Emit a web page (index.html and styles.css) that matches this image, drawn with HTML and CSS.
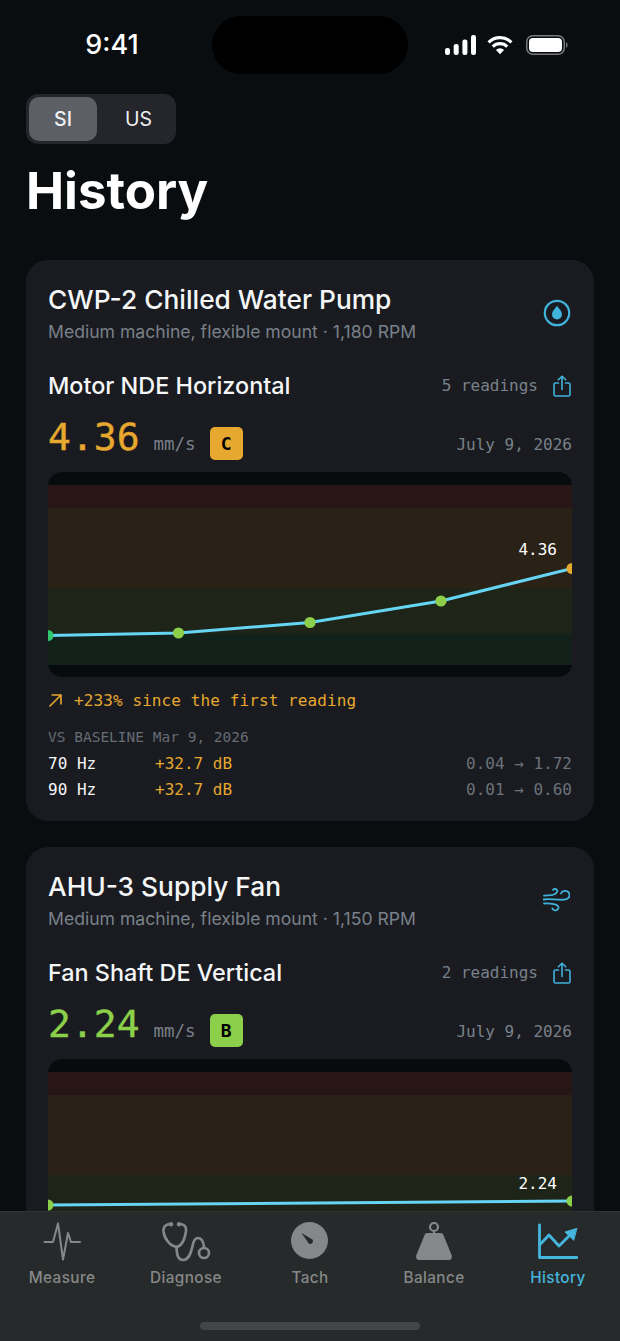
FILE: index.html
```html
<!DOCTYPE html>
<html lang="en">
<head>
    <meta charset="UTF-8">
    <meta name="viewport" content="width=device-width, initial-scale=1.0">
    <title>History</title>
    <link rel="stylesheet" href="styles.css">
</head>
<body>
    <div class="screen">
        <div class="status-bar">
            <span class="clock">9:41</span>
            <span class="island"></span>
            <div class="status-icons">
                <svg width="31" height="20" viewBox="0 0 31 20" fill="#fff">
                    <rect x="0" y="13" width="5" height="7" rx="2.2"/>
                    <rect x="8.700" y="9" width="5" height="11" rx="2.2"/>
                    <rect x="17.400" y="4.500" width="5" height="15.500" rx="2.2"/>
                    <rect x="26" y="0" width="5" height="20" rx="2.2"/>
                </svg>
                <svg width="26" height="20" viewBox="0 0 27 20" fill="none" stroke="#fff" stroke-width="3.2">
                    <path d="M1.6 7.2a17 17 0 0 1 23.8 0"/>
                    <path d="M6 11.6a10.8 10.8 0 0 1 15 0"/>
                    <path d="M13.5 19.6l-4.2-4.4a6 6 0 0 1 8.4 0z" fill="#fff" stroke="none"/>
                </svg>
                <svg class="battery" width="42" height="20" viewBox="0 0 42 20">
                    <rect x="0.75" y="0.75" width="37.500" height="18.500" rx="6" fill="none" stroke="#77797b" stroke-width="1.5"/>
                    <rect x="3" y="3" width="33" height="14" rx="4" fill="#fff"/>
                    <path d="M40 7v6a3.2 3.2 0 0 0 1.600-3A3.2 3.2 0 0 0 40 7z" fill="#77797b"/>
                </svg>
            </div>
        </div>

        <div class="units">
            <span class="unit unit-active">SI</span>
            <span class="unit unit-other">US</span>
        </div>
        <h1>History</h1>

        <section class="card">
            <div class="card-head">
                <div>
                    <h2>CWP-2 Chilled Water Pump</h2>
                    <p class="machine">Medium machine, flexible mount · 1,180 RPM</p>
                </div>
                <svg class="machine-icon" width="28" height="28" viewBox="0 0 28 28">
                    <circle cx="14" cy="14" r="12.2" fill="none" stroke="#3fb3dc" stroke-width="2.2"/>
                    <path d="M14 6.800c2.600 3.400 5 5.800 5 8.600a5 5 0 0 1-10 0c0-2.800 2.400-5.200 5-8.600z" fill="#3fb3dc"/>
                </svg>
            </div>
            <div class="point-row">
                <h3>Motor NDE Horizontal</h3>
                <span class="readings">5 readings</span>
                <svg class="share" width="18" height="22" viewBox="0 0 18 22" fill="none" stroke="#3fb3dc" stroke-width="1.6" stroke-linecap="round" stroke-linejoin="round">
                    <path d="M5.500 8H2.600A1.600 1.600 0 0 0 1 9.600v9.800A1.600 1.600 0 0 0 2.600 21h12.800a1.600 1.600 0 0 0 1.600-1.600V9.600A1.600 1.600 0 0 0 15.400 8h-2.900"/>
                    <path d="M9 14.500V1.200M5.300 4.800L9 1.200l3.700 3.600"/>
                </svg>
            </div>
            <div class="value-row">
                <span class="value amber">4.36</span>
                <span class="value-unit">mm/s</span>
                <span class="badge badge-c">C</span>
                <span class="date">July 9, 2026</span>
            </div>
            <div class="chart">
                <svg width="524" height="205" viewBox="0 0 524 205">
                    <rect y="13" width="524" height="23" fill="#281616"/>
                    <rect y="36" width="524" height="80" fill="#2a2216"/>
                    <rect y="116" width="524" height="46" fill="#1e2518"/>
                    <rect y="162" width="524" height="31" fill="#12221b"/>
                    <polyline points="0,163.500 130.500,161 262,150.500 393,129 524,96.500" fill="none" stroke="#66d5f4" stroke-width="3"/>
                    <circle cx="0" cy="163.500" r="5.500" fill="#2fc66f"/>
                    <circle cx="130.500" cy="161" r="5.600" fill="#8ccf4a"/>
                    <circle cx="262" cy="150.500" r="5.600" fill="#8ccf4a"/>
                    <circle cx="393" cy="129" r="5.600" fill="#8ccf4a"/>
                    <circle cx="524" cy="96.500" r="5.500" fill="#e6a82e"/>
                    <text class="chart-label" x="509" y="83" text-anchor="end">4.36</text>
                </svg>
            </div>
            <div class="trend">
                <svg width="15" height="15" viewBox="0 0 15 15" fill="none" stroke="#e6a82e" stroke-width="1.6">
                    <path d="M1.500 13.500L13 2M3.500 2H13v9.500"/>
                </svg>
                <span>+233% since the first reading</span>
            </div>
            <p class="baseline">VS BASELINE Mar 9, 2026</p>
            <div class="band-row">
                <span class="hz">70 Hz</span>
                <span class="db">+32.7 dB</span>
                <span class="amps">0.04 → 1.72</span>
            </div>
            <div class="band-row">
                <span class="hz">90 Hz</span>
                <span class="db">+32.7 dB</span>
                <span class="amps">0.01 → 0.60</span>
            </div>
        </section>

        <section class="card">
            <div class="card-head">
                <div>
                    <h2>AHU-3 Supply Fan</h2>
                    <p class="machine">Medium machine, flexible mount · 1,150 RPM</p>
                </div>
                <svg class="machine-icon wind" width="27" height="24" viewBox="0 0 27 24" fill="none" stroke="#3fb3dc" stroke-width="1.8" stroke-linecap="round">
                    <path d="M1 7.700C5 7 9 8 12 6C14.500 4.500 15 2.500 13.500 1.500C12.500.7 11 .8 10 1.800"/>
                    <path d="M.5 11.500C7 10.500 12 12 21 11.700C25 11.500 27 9 26.500 6.500C26 4 24 2.700 22 2.800C20 2.900 18.500 4 18 5.500"/>
                    <path d="M1 15.500C5 15 8 15.500 11 16.200C14 17 15.800 18.500 15.500 20C15 22 12.500 22.800 10.800 22C10 21.500 9.500 21 9.300 20.300"/>
                </svg>
            </div>
            <div class="point-row">
                <h3>Fan Shaft DE Vertical</h3>
                <span class="readings">2 readings</span>
                <svg class="share" width="18" height="22" viewBox="0 0 18 22" fill="none" stroke="#3fb3dc" stroke-width="1.6" stroke-linecap="round" stroke-linejoin="round">
                    <path d="M5.500 8H2.600A1.600 1.600 0 0 0 1 9.600v9.800A1.600 1.600 0 0 0 2.600 21h12.800a1.600 1.600 0 0 0 1.600-1.600V9.600A1.600 1.600 0 0 0 15.400 8h-2.900"/>
                    <path d="M9 14.500V1.200M5.300 4.800L9 1.200l3.700 3.600"/>
                </svg>
            </div>
            <div class="value-row">
                <span class="value green">2.24</span>
                <span class="value-unit">mm/s</span>
                <span class="badge badge-b">B</span>
                <span class="date">July 9, 2026</span>
            </div>
            <div class="chart">
                <svg width="524" height="205" viewBox="0 0 524 205">
                    <rect y="13" width="524" height="23" fill="#281616"/>
                    <rect y="36" width="524" height="80" fill="#2a2216"/>
                    <rect y="116" width="524" height="46" fill="#1e2518"/>
                    <rect y="162" width="524" height="31" fill="#12221b"/>
                    <polyline points="0,146 524,142" fill="none" stroke="#66d5f4" stroke-width="3"/>
                    <circle cx="0" cy="146" r="5.500" fill="#8ccf4a"/>
                    <circle cx="524" cy="142" r="5.500" fill="#8ccf4a"/>
                    <text class="chart-label" x="509" y="130" text-anchor="end">2.24</text>
                </svg>
            </div>
        </section>

        <nav class="tabbar">
            <div class="tab">
                <svg width="38" height="40" viewBox="0 0 38 40" fill="none" stroke="#858888" stroke-width="2" stroke-linecap="round" stroke-linejoin="round">
                    <path d="M1.500 20H10L15 1.500 20 37.500 25 11 28 20H37"/>
                </svg>
                <span>Measure</span>
            </div>
            <div class="tab">
                <svg width="50" height="40" viewBox="0 0 50 40" fill="none" stroke="#858888" stroke-width="2.600" stroke-linecap="round">
                    <path d="M10 2C5 2 2 4.500 2.500 9.500C3.500 17 9 24 15.500 25"/>
                    <path d="M18 2C23 2 25.500 4 25 9C24 16 21 24 15.500 25"/>
                    <path d="M15.500 25C15.500 32 17 38 22 38C28 38 30 31 31.500 24C32.500 18.500 34 16 37 16C40.500 16 42.500 20 43 25"/>
                    <circle cx="43" cy="31" r="5"/>
                    <circle cx="10" cy="2.300" r="2.200" fill="#858888" stroke="none"/>
                    <circle cx="18" cy="2.300" r="2.200" fill="#858888" stroke="none"/>
                </svg>
                <span>Diagnose</span>
            </div>
            <div class="tab">
                <svg width="38" height="40" viewBox="0 0 38 40">
                    <circle cx="18.500" cy="18.500" r="18.500" fill="#858888"/>
                    <path d="M10.500 11L21.500 17.500A2.800 2.800 0 0 1 17.800 21.500Z" fill="#262929"/>
                </svg>
                <span>Tach</span>
            </div>
            <div class="tab">
                <svg width="38" height="40" viewBox="0 0 38 40" fill="#858888">
                    <circle cx="19" cy="5" r="4" fill="none" stroke="#858888" stroke-width="2.200"/>
                    <path d="M18 8.500h2V12h-2z"/>
                    <path d="M13 11h12c2 0 3 .7 3.600 2.500L36.600 33c.8 3-.5 5-3 5H4.400c-2.500 0-3.800-2-3-5L9.400 13.500c.6-1.800 1.600-2.500 3.600-2.500z"/>
                </svg>
                <span>Balance</span>
            </div>
            <div class="tab tab-active">
                <svg width="40" height="40" viewBox="0 0 40 40" fill="none" stroke="#45b6de" stroke-width="2.800" stroke-linecap="round" stroke-linejoin="round">
                    <path d="M1.500 3v32.500H39"/>
                    <path d="M1.500 23L11 13 21 24 31 14"/>
                    <path d="M38.500 6.500L27 10 35.500 18z" fill="#45b6de" stroke-width="1"/>
                </svg>
                <span>History</span>
            </div>
            <span class="home-bar"></span>
        </nav>
    </div>
</body>
</html>
```

FILE: styles.css
```css
* {
    box-sizing: border-box;
}

body {
    margin: 0;
    background: #0a0d10;
    font-family: Inter, 'Noto Sans', sans-serif;
    color: #fff;
}

.screen {
    position: relative;
    width: 620px;
    height: 1341px;
    overflow: hidden;
    padding: 0 26px;
}

.status-bar {
    height: 94px;
    padding-top: 16px;
    display: flex;
    align-items: flex-start;
    margin: 0 -26px;
}

.clock {
    width: 212px;
    height: 58px;
    line-height: 57px;
    text-align: center;
    padding-left: 12px;
    font-size: 27px;
    font-weight: 500;
}

.island {
    width: 196px;
    height: 58px;
    border-radius: 29px;
    background: #000;
}

.status-icons {
    display: flex;
    align-items: center;
    gap: 11px;
    height: 58px;
    margin-left: 37px;
}

.battery {
    margin-left: 2px;
}

.units {
    display: flex;
    width: 150px;
    height: 50px;
    padding: 3px;
    border-radius: 12px;
    background: #24262b;
}

.unit {
    flex: 1;
    display: flex;
    align-items: center;
    justify-content: center;
    border-radius: 10px;
    font-size: 19.500px;
    color: #f0f0f2;
}

.unit-active {
    flex: 0 0 68px;
    background: #5c5f66;
    font-weight: 500;
}

.unit-other {
    padding-left: 7px;
}

h1 {
    margin: 16px 0 38px;
    font-size: 51px;
    line-height: 62px;
    font-weight: 700;
}

.card {
    background: #191b20;
    border-radius: 22px;
    padding: 22px 22px 18px;
    margin-bottom: 26px;
}

.card-head {
    display: flex;
    justify-content: space-between;
    align-items: center;
}

.machine-icon {
    margin-right: 1px;
}

.wind {
    margin-right: 2px;
}

h2 {
    margin: 0;
    font-size: 26.300px;
    line-height: 36px;
    font-weight: 500;
    color: #f5f6f7;
}

.machine {
    margin: 3px 0 0;
    font-size: 17.600px;
    line-height: 22px;
    color: #79818a;
}

.point-row {
    display: flex;
    align-items: center;
    margin-top: 24px;
    height: 36px;
}

h3 {
    margin: 0;
    flex: 1;
    font-size: 23.400px;
    font-weight: 500;
    color: #f5f6f7;
}

.readings {
    font-family: 'DejaVu Sans Mono', monospace;
    font-size: 16px;
    color: #79818a;
}

.share {
    margin: 2px 1px 0 15px;
}

.value-row {
    display: flex;
    align-items: center;
    margin-top: 11px;
    height: 46px;
    font-family: 'DejaVu Sans Mono', monospace;
}

.value {
    font-size: 38px;
    -webkit-text-stroke: 0.4px currentColor;
}

.amber {
    color: #e6a82e;
}

.green {
    color: #8ccf4a;
}

.value-unit {
    margin: 14px 0 0 14px;
    font-size: 17.500px;
    color: #79818a;
}

.badge {
    display: flex;
    align-items: center;
    justify-content: center;
    width: 33px;
    height: 33px;
    margin: 13px 0 0 14px;
    border-radius: 5px;
    color: #000;
    font-size: 18px;
    font-weight: 700;
}

.badge-c {
    background: #e6a82e;
}

.badge-b {
    background: #8ccf4a;
}

.date {
    margin: 14px 0 0 auto;
    font-size: 16px;
    color: #79818a;
}

.chart {
    margin-top: 12px;
    height: 205px;
    border-radius: 14px;
    overflow: hidden;
    background: #080b0e;
}

.chart svg {
    display: block;
}

.chart-label {
    font-family: 'DejaVu Sans Mono', monospace;
    font-size: 16px;
    fill: #fff;
}

.trend {
    display: flex;
    align-items: center;
    gap: 11px;
    margin-top: 12px;
    height: 22px;
    font-family: 'DejaVu Sans Mono', monospace;
    font-size: 16px;
    letter-spacing: 0.1px;
    color: #e6a82e;
}

.baseline {
    margin: 16px 0 3px;
    font-family: 'DejaVu Sans Mono', monospace;
    font-size: 14.500px;
    line-height: 20px;
    color: #656c74;
}

.band-row {
    display: flex;
    height: 26.500px;
    align-items: center;
    font-family: 'DejaVu Sans Mono', monospace;
    font-size: 16px;
}

.hz {
    width: 107px;
    color: #f5f6f7;
}

.db {
    color: #e6a82e;
}

.amps {
    margin-left: auto;
    color: #6b727a;
}

.tabbar {
    position: absolute;
    left: 0;
    right: 0;
    bottom: 0;
    height: 130px;
    display: flex;
    padding-top: 10px;
    background: #272a2a;
    border-top: 1px solid #303333;
}

.tab {
    flex: 1;
    display: flex;
    flex-direction: column;
    align-items: center;
    font-size: 15.300px;
    font-weight: 500;
    letter-spacing: 0.4px;
    color: #858888;
}

.tab svg {
    height: 40px;
    margin-bottom: 6px;
}

.tab-active {
    color: #45b6de;
}

.home-bar {
    position: absolute;
    left: 200px;
    bottom: 11px;
    width: 220px;
    height: 8px;
    border-radius: 4px;
    background: #424545;
}
```
